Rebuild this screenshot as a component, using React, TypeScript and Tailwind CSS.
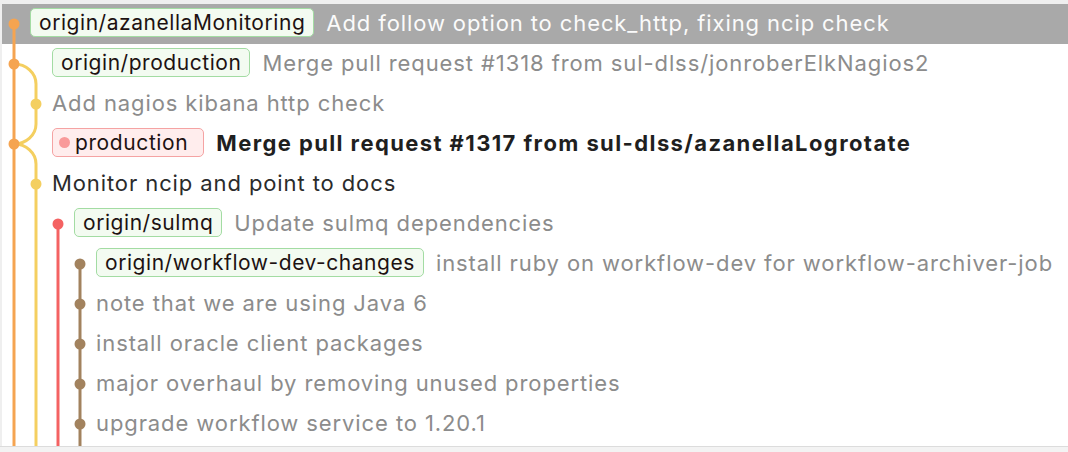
import React from 'react';

const O = '#f5a451';
const Y = '#f4cf60';
const R = '#f46262';
const B = '#a2825e';

const LANE_X = [12, 34, 56, 78];
const LANE_COLORS = [O, Y, R, B];

type Line = { lane: number; from: number; to: number };

type Commit = {
  width: number;
  lines: Line[];
  curves?: string[];
  dot?: number;
  badge?: { name: string; kind: 'remote' | 'local' };
  message?: string;
  tone?: 'muted' | 'normal' | 'bold' | 'selected';
};

const full = (lane: number): Line => ({ lane, from: 0, to: 40 });
const start = (lane: number): Line => ({ lane, from: 20, to: 40 });

const commits: Commit[] = [
  {
    width: 28,
    lines: [start(0)],
    dot: 0,
    badge: { name: 'origin/azanellaMonitoring', kind: 'remote' },
    message: 'Add follow option to check_http, fixing ncip check',
    tone: 'selected',
  },
  {
    width: 50,
    lines: [full(0)],
    curves: ['M12 20 A22 20 0 0 1 34 40'],
    dot: 0,
    badge: { name: 'origin/production', kind: 'remote' },
    message: 'Merge pull request #1318 from sul-dlss/jonroberElkNagios2',
    tone: 'muted',
  },
  {
    width: 50,
    lines: [full(0), full(1)],
    dot: 1,
    message: 'Add nagios kibana http check',
    tone: 'muted',
  },
  {
    width: 50,
    lines: [full(0)],
    curves: ['M34 0 A22 20 0 0 1 12 20', 'M12 20 A22 20 0 0 1 34 40'],
    dot: 0,
    badge: { name: 'production', kind: 'local' },
    message: 'Merge pull request #1317 from sul-dlss/azanellaLogrotate',
    tone: 'bold',
  },
  {
    width: 50,
    lines: [full(0), full(1)],
    dot: 1,
    message: 'Monitor ncip and point to docs',
    tone: 'normal',
  },
  {
    width: 72,
    lines: [full(0), full(1), start(2)],
    dot: 2,
    badge: { name: 'origin/sulmq', kind: 'remote' },
    message: 'Update sulmq dependencies',
    tone: 'muted',
  },
  {
    width: 94,
    lines: [full(0), full(1), full(2), start(3)],
    dot: 3,
    badge: { name: 'origin/workflow-dev-changes', kind: 'remote' },
    message: 'install ruby on workflow-dev for workflow-archiver-job',
    tone: 'muted',
  },
  {
    width: 94,
    lines: [full(0), full(1), full(2), full(3)],
    dot: 3,
    message: 'note that we are using Java 6',
    tone: 'muted',
  },
  {
    width: 94,
    lines: [full(0), full(1), full(2), full(3)],
    dot: 3,
    message: 'install oracle client packages',
    tone: 'muted',
  },
  {
    width: 94,
    lines: [full(0), full(1), full(2), full(3)],
    dot: 3,
    message: 'major overhaul by removing unused properties',
    tone: 'muted',
  },
  {
    width: 94,
    lines: [full(0), full(1), full(2), full(3)],
    dot: 3,
    message: 'upgrade workflow service to 1.20.1',
    tone: 'muted',
  },
  {
    width: 94,
    lines: [full(0), full(1), full(2), full(3)],
  },
];

const toneClass = {
  muted: 'text-[#8c8c8c] tracking-[0.9px]',
  normal: 'text-[#2b2b2b] tracking-[0.9px]',
  bold: 'text-[#1f1f1f] font-bold tracking-[1.4px]',
  selected: 'text-[#fbfbfb] tracking-[0.9px]',
};

const Badge: React.FC<{ name: string; kind: 'remote' | 'local' }> = ({ name, kind }) => {
  if (kind === 'local') {
    return (
      <span className="flex h-[29px] items-center gap-[5px] rounded-[5px] border-[1.5px] border-[#f5a3a3] bg-[#ffeded] pl-[6px] pr-[15px] text-[21px] tracking-[0.6px] text-[#1d1212]">
        <span className="h-[11px] w-[11px] rounded-full bg-[#f99a9a]" />
        {name}
      </span>
    );
  }
  return (
    <span className="flex h-[29px] items-center rounded-[5px] border-[1.5px] border-[#a3dca3] bg-[#f3fbf1] px-[8px] text-[21px] tracking-[0.55px] text-[#1d1212]">
      {name}
    </span>
  );
};

const Row: React.FC<{ commit: Commit }> = ({ commit }) => (
  <div
    className={`flex h-[40px] shrink-0 items-center ${commit.tone === 'selected' ? 'bg-[#a9a9a9]' : ''}`}
  >
    <svg width={commit.width} height={40} className="shrink-0">
      {commit.lines.map((l, i) => (
        <line
          key={i}
          x1={LANE_X[l.lane]}
          x2={LANE_X[l.lane]}
          y1={l.from}
          y2={l.to}
          stroke={LANE_COLORS[l.lane]}
          strokeWidth={3}
        />
      ))}
      {commit.curves?.map((d, i) => (
        <path key={i} d={d} fill="none" stroke={Y} strokeWidth={3} />
      ))}
      {commit.dot !== undefined && (
        <circle cx={LANE_X[commit.dot]} cy={20} r={5.5} fill={LANE_COLORS[commit.dot]} />
      )}
    </svg>
    <div className="mb-[3px] flex items-center">
      {commit.badge && (
        <span className="mr-[12px]">
          <Badge name={commit.badge.name} kind={commit.badge.kind} />
        </span>
      )}
      {commit.message && (
        <span className={`whitespace-nowrap text-[22px] ${toneClass[commit.tone ?? 'muted']}`}>
          {commit.message}
        </span>
      )}
    </div>
  </div>
);

export default function App() {
  return (
    <div
      className="flex h-[452px] w-[1068px] flex-col overflow-hidden bg-[#efefef] leading-none"
      style={{ fontFamily: 'Inter, "Noto Sans", sans-serif' }}
    >
      <div className="ml-[2px] mt-[4px] flex h-[442px] flex-col overflow-hidden bg-white">
        {commits.map((c, i) => (
          <Row key={i} commit={c} />
        ))}
      </div>
      <div className="flex-1 border-t border-[#dcdcdc] bg-[#f3f3f3]" />
    </div>
  );
}
